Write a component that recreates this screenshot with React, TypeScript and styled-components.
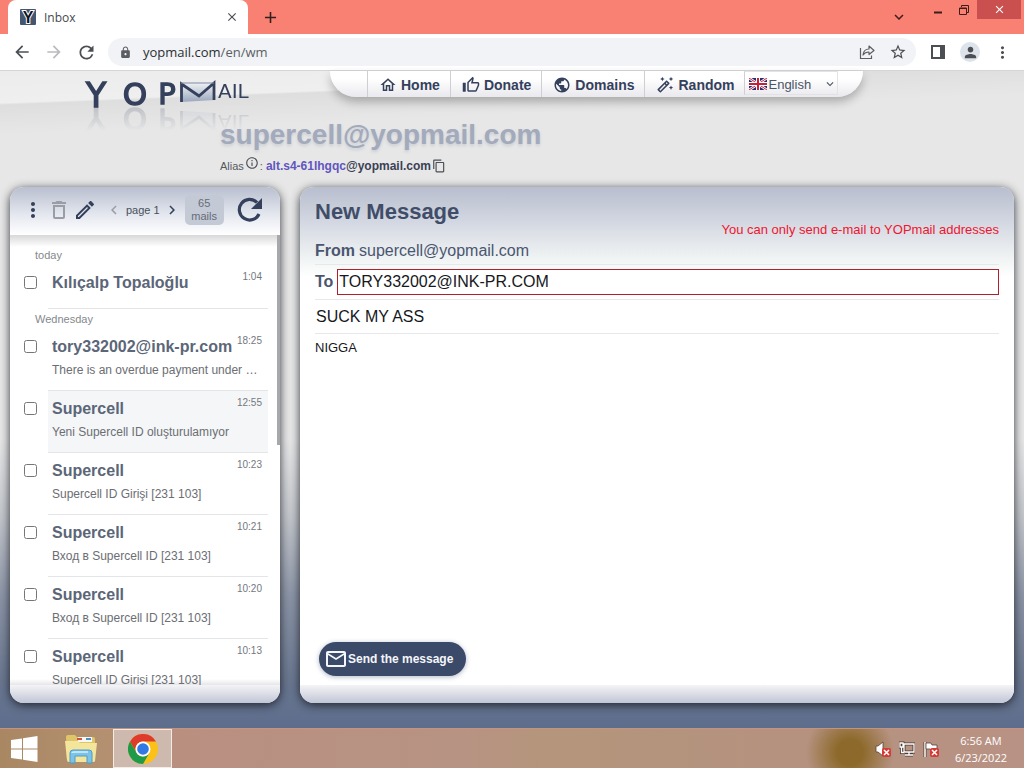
import React from "react";
import styled, { createGlobalStyle } from "styled-components";
import {
  MdAdd,
  MdArrowBack,
  MdArrowForward,
  MdChevronLeft,
  MdChevronRight,
  MdClose,
  MdContentCopy,
  MdExpandMore,
  MdLock,
  MdMoreVert,
  MdOutlineAutoFixHigh,
  MdOutlineDelete,
  MdOutlineEdit,
  MdOutlineHome,
  MdOutlineInfo,
  MdOutlineMail,
  MdOutlineThumbUp,
  MdPerson,
  MdPublic,
  MdRefresh,
  MdStarBorder,
} from "react-icons/md";

const navy = "#34405c";
const slate = "#5b6678";
const uiFont = `"Liberation Sans", Arial, sans-serif`;
const systemFont = `"Open Sans", "Noto Sans", sans-serif`;

const GlobalStyle = createGlobalStyle`
  * { box-sizing: border-box; }
  body { margin: 0; font-family: ${uiFont}; }
  button, input, textarea, select { font-family: inherit; }
  button { border: 0; padding: 0; background: none; cursor: pointer; }
  svg { display: block; flex: none; }
`;

const Screen = styled.div`
  display: flex;
  flex-direction: column;
  height: 100vh;
  min-height: 500px;
`;

/* ---------- browser chrome ---------- */

const TabStrip = styled.div`
  display: flex;
  flex: none;
  height: 34px;
  padding-left: 8px;
  background: #f88173;
`;

const Tab = styled.div`
  display: flex;
  align-items: center;
  gap: 8px;
  width: 240px;
  padding: 0 10px 0 12px;
  border-radius: 8px 8px 0 0;
  background: #fff;
  color: #45494d;
  font: 12px ${systemFont};
`;

const TabTitle = styled.span`
  flex: 1;
`;

const IconButton = styled.button<{ $color?: string; $size?: number }>`
  display: flex;
  flex: none;
  align-items: center;
  justify-content: center;
  width: ${(p) => p.$size ?? 20}px;
  height: ${(p) => p.$size ?? 20}px;
  color: ${(p) => p.$color ?? "#4b4f54"};
`;

const NewTab = styled(IconButton)`
  align-self: center;
  margin-left: 12px;
  color: #33201e;
`;

const WindowControls = styled.div`
  display: flex;
  align-items: flex-start;
  margin-left: auto;
  padding-right: 3px;
`;

const TabSearch = styled(IconButton)`
  margin: 7px 16px 0 0;
`;

const WindowButton = styled.button<{ $close?: boolean }>`
  display: flex;
  align-items: center;
  justify-content: center;
  width: ${(p) => (p.$close ? 44 : 26)}px;
  height: 19px;
  background: ${(p) => (p.$close ? "#c9504e" : "transparent")};
  color: ${(p) => (p.$close ? "#fff" : "#3c1d1a")};
`;

const Toolbar = styled.div`
  display: flex;
  flex: none;
  align-items: center;
  gap: 12px;
  height: 37px;
  padding: 0 12px;
  border-bottom: 1px solid #d5d5d7;
  background: #fff;
`;

const Omnibox = styled.div`
  display: flex;
  flex: 1;
  align-items: center;
  gap: 11px;
  height: 28px;
  padding: 0 8px 0 11px;
  border-radius: 14px;
  background: #f1f3f6;
  color: #5b5f64;
  font: 13px ${systemFont};
`;

const Address = styled.span`
  flex: 1;
  b {
    color: #2b2e31;
    font-weight: 400;
  }
`;

const Avatar = styled(IconButton)`
  border-radius: 50%;
  background: #dde3ea;
`;

/* ---------- mail site ---------- */

const Site = styled.div`
  display: flex;
  flex: 1;
  flex-direction: column;
  min-height: 0;
  background: linear-gradient(#e7e7e7 0, #e7e7e7 56%, #c2c5ca 68%, #8b94a6 80%, #6b7890 92%, #5d6d8c 100%);
`;

const Header = styled.header`
  display: flex;
  flex: none;
  height: 116px;
  background: linear-gradient(177.75deg, #ececec 0, #efefef 32px, #dedede 34px, #e7e7e7 64px);
`;

const Brand = styled.a`
  flex: none;
  width: 220px;
  padding: 8px 0 0 80px;
  svg {
    overflow: visible;
    -webkit-box-reflect: below -1px linear-gradient(transparent 10%, rgba(0, 0, 0, 0.2));
  }
`;

const HeaderBody = styled.div`
  flex: 1;
`;

const Nav = styled.nav`
  display: flex;
  width: 533px;
  height: 26px;
  margin-left: 110px;
  padding-left: 37px;
  border-radius: 0 0 30px 30px;
  background: linear-gradient(#fff 30%, #e9e9ee);
  box-shadow: 0 5px 10px rgba(0, 0, 0, 0.25);
`;

const NavLink = styled.a`
  display: flex;
  align-items: center;
  gap: 4px;
  padding: 2px 10px 0 11px;
  border-left: 1px solid #cfcfd3;
  color: ${navy};
  font-size: 14px;
  font-weight: 700;
  text-decoration: none;
`;

const Language = styled.label`
  display: flex;
  align-items: center;
  width: 94px;
  height: 24px;
  padding: 2px 0 0 4px;
  border: 1px solid #e3e3e6;
  border-left-color: #cfcfd3;
  color: #4a5468;
`;

const LanguageSelect = styled.select`
  flex: 1;
  min-width: 0;
  padding: 0 0 0 1px;
  border: 0;
  appearance: none;
  background: none;
  color: #4a5468;
  font-size: 13px;
`;

const MailboxName = styled.h1`
  margin: 20px 0 0;
  color: #a2aabb;
  font-size: 28px;
  line-height: 36px;
  text-shadow: 0 2px 3px rgba(120, 130, 155, 0.25);
`;

const Alias = styled.div`
  display: flex;
  align-items: center;
  height: 20px;
  margin-top: 3px;
  color: #54595f;
  font-size: 11px;
`;

const AliasInfo = styled(IconButton)`
  margin: 0 1px 6px 1px;
`;

const AliasAddress = styled.strong`
  margin-left: 3px;
  color: #3a4154;
  font-size: 12px;
  a {
    color: #6155c0;
    text-decoration: none;
  }
`;

const Columns = styled.div`
  display: grid;
  grid-template-columns: 270px 1fr;
  flex: 1;
  gap: 20px;
  min-height: 0;
  padding: 0 10px 25px;
`;

const Panel = styled.section`
  display: flex;
  flex-direction: column;
  min-height: 0;
  overflow: hidden;
  border-radius: 14px;
  background: #fff;
  box-shadow: 0 2px 10px rgba(20, 22, 30, 0.85);
`;

const PanelFoot = styled.div`
  flex: none;
  height: 18px;
  background: linear-gradient(#f4f4f6, #c1c6d6);
`;

const ListToolbar = styled.div`
  display: flex;
  flex: none;
  align-items: center;
  height: 48px;
  padding: 0 14px 2px 12px;
  background: linear-gradient(#b9bfcf, #e6e9f0 60%, #fff);
  color: ${navy};
`;

const Pager = styled.div`
  display: flex;
  flex: none;
  align-items: center;
  gap: 2px;
  margin: 0 3px 0 8px;
  color: #4a4f5a;
  font-size: 11px;
  white-space: nowrap;
`;

const Count = styled.div`
  flex: none;
  width: 39px;
  margin-right: 12px;
  padding: 2px 0;
  border-radius: 5px;
  background: #c4c9d6;
  color: #666c79;
  font-size: 11px;
  line-height: 13px;
  text-align: center;
`;

const ListArea = styled.div`
  display: flex;
  flex: 1;
  min-height: 0;
  background: linear-gradient(#d8d8da, #fff 12px, #fff calc(100% - 6px), #e6e6e9);
`;

const MailList = styled.div`
  flex: 1;
  min-width: 0;
  padding: 10px 9px 0 10px;
  overflow: hidden;
`;

const ScrollThumb = styled.div`
  width: 3px;
  height: 210px;
  background: #a7a8ab;
`;

const DayLabel = styled.h2`
  margin: 0;
  padding-left: 15px;
  color: #85888d;
  font-size: 11px;
  font-weight: 400;
  line-height: 20px;
`;

const Mail = styled.div`
  display: grid;
  grid-template-columns: 28px 1fr;
`;

const Check = styled.input`
  width: 13px;
  height: 13px;
  margin: 11px 0 0 4px;
`;

const MailBody = styled.div<{ $active?: boolean; $short?: boolean }>`
  min-width: 0;
  height: ${(p) => (p.$short ? 44 : 62)}px;
  padding: 6px 6px 0 4px;
  border-bottom: 1px solid #e4e5e8;
  background: ${(p) => (p.$active ? "#f4f6f8" : "transparent")};
`;

const MailTop = styled.div`
  display: flex;
  justify-content: space-between;
  line-height: 24px;
`;

const Sender = styled.strong`
  color: ${slate};
  font-size: 16px;
`;

const Time = styled.time`
  color: #74787e;
  font-size: 10px;
  line-height: 11px;
`;

const Subject = styled.div`
  color: #6b6e73;
  font-size: 12px;
  line-height: 22px;
  white-space: nowrap;
`;

const Compose = styled.form`
  display: flex;
  flex: 1;
  flex-direction: column;
  min-height: 0;
  padding: 11px 15px 9px;
  background: linear-gradient(#b8bece 0, #d4d8e2 36px, #f1f4f4 72px, #fff 90px);
`;

const Title = styled.h2`
  margin: 0;
  color: #404d68;
  font-size: 22px;
  line-height: 28px;
`;

const Warning = styled.p`
  margin: -4px 0 0;
  color: #f0142f;
  font-size: 13px;
  line-height: 15px;
  text-align: right;
`;

const Field = styled.div<{ $height: number }>`
  display: flex;
  flex: none;
  align-items: center;
  gap: 4px;
  height: ${(p) => p.$height}px;
  border-bottom: 1px solid #e6e8ec;
  color: #4a5670;
  font-size: 16px;
  label {
    font-weight: 700;
  }
`;

const TextInput = styled.input<{ $invalid?: boolean }>`
  flex: 1;
  min-width: 0;
  height: 26px;
  padding: 0 1px;
  border: ${(p) => (p.$invalid ? "1px solid #b0202c" : "0")};
  outline: 0;
  background: #fff;
  color: #16181c;
  font-size: 16px;
`;

const Message = styled.textarea`
  flex: 1;
  min-height: 0;
  padding: 6px 0;
  border: 0;
  outline: 0;
  resize: none;
  background: #fff;
  color: #16181c;
  font-size: 13px;
  line-height: 15px;
`;

const Send = styled.button`
  display: flex;
  align-items: center;
  align-self: flex-start;
  flex: none;
  height: 34px;
  margin-left: 4px;
  padding: 0 13px 0 5px;
  border-radius: 17px;
  background: #3b4a68;
  box-shadow: 0 1px 5px rgba(60, 75, 120, 0.4);
  color: #f4f6fa;
  font-size: 12px;
  font-weight: 700;
`;

/* ---------- taskbar ---------- */

const Taskbar = styled.footer`
  display: flex;
  flex: none;
  align-items: center;
  height: 40px;
  padding-right: 17px;
  border-top: 1px solid #c3937f;
  background:
    radial-gradient(ellipse 44px 44px at 83% 60%, #8d6a2b 30%, transparent),
    linear-gradient(90deg, #a98763 0, #b3906f 10%, #b98f80 17%, #b79384 44%, #b5957b 54%, #b4927f 75%, #b89284 100%);
`;

const TaskButton = styled.button<{ $active?: boolean; $width: number }>`
  display: flex;
  align-items: center;
  justify-content: center;
  width: ${(p) => p.$width}px;
  height: 39px;
  border: ${(p) => (p.$active ? "1px solid #f3ebe6" : "0")};
  background: ${(p) => (p.$active ? "#cdb9ae" : "transparent")};
`;

const Tray = styled.div`
  display: flex;
  align-items: center;
  gap: 8px;
  margin-left: auto;
`;

const Clock = styled.time`
  margin-left: 8px;
  color: #fff;
  font: 11px ${systemFont};
  line-height: 17px;
  text-align: center;
`;

/* ---------- drawings ---------- */

const Favicon = () => (
  <svg width="16" height="16" viewBox="0 0 16 16">
    <rect width="16" height="16" rx="1" fill="#46566f" />
    <text x="8" y="14" textAnchor="middle" fontFamily="Liberation Sans" fontWeight="700" fontSize="16" fill="#10141f" stroke="#fff" strokeWidth="2" paintOrder="stroke">Y</text>
  </svg>
);

const Logo = () => (
  <svg width="172" height="28" viewBox="0 0 172 28" role="img" aria-label="YOPmail">
    <g fontFamily="DejaVu Sans, sans-serif" fill={navy} stroke={navy} strokeWidth="1.400" textAnchor="middle">
      <text x="16" y="28" fontSize="33">Y</text>
      <text x="55" y="26" fontSize="31">O</text>
      <text x="87" y="25" fontSize="29">P</text>
    </g>
    <defs>
      <linearGradient id="flap" x1="0" y1="0" x2="0" y2="1">
        <stop offset="0" stopColor="#eef1f5" />
        <stop offset="1" stopColor="#9aa8bd" />
      </linearGradient>
    </defs>
    <path d="M101 4L135 4V21L101 23Z" fill="url(#flap)" />
    <path d="M101.500 23V5L119 17L134 4V21" fill="none" stroke={navy} strokeWidth="2.800" />
    <path d="M101 4H134" stroke="#7d8ba3" strokeWidth="1" />
    <text x="138" y="19" fontFamily="DejaVu Sans, sans-serif" fontSize="20" fill={navy}>AIL</text>
  </svg>
);

const Flag = () => (
  <svg width="18" height="12" viewBox="0 0 18 12">
    <rect width="18" height="12" fill="#27306e" />
    <path d="M0 0L18 12M18 0L0 12" stroke="#fff" strokeWidth="2.600" />
    <path d="M0 0L18 12M18 0L0 12" stroke="#c8203a" strokeWidth="1" />
    <path d="M9 0V12M0 6H18" stroke="#fff" strokeWidth="4" />
    <path d="M9 0V12M0 6H18" stroke="#c8203a" strokeWidth="2" />
  </svg>
);

const ReloadIcon = () => (
  <svg width="28" height="28" viewBox="0 0 28 28" fill="none">
    <path d="M23 18A10.300 10.300 0 1 1 21 6.500" stroke={navy} strokeWidth="3.200" />
    <path d="M26 2V13H15Z" fill={navy} />
  </svg>
);

const ShareIcon = () => (
  <svg width="16" height="16" viewBox="0 0 16 16" fill="none" stroke="#5b5f64" strokeWidth="1.200">
    <path d="M1.500 4V14.500H12.500V11.500" />
    <path d="M4 11C4.500 7 7 5 10 5V2L15 6.500L10 10.500V8C7.500 8 5.500 8.800 4 11Z" strokeLinejoin="round" />
  </svg>
);

const SidePanelIcon = () => (
  <svg width="14" height="14" viewBox="0 0 14 14">
    <rect x="1" y="1" width="12" height="12" fill="none" stroke="#4b4f54" strokeWidth="2" />
    <rect x="9" y="1" width="4" height="12" fill="#4b4f54" />
  </svg>
);

const WindowsLogo = () => (
  <svg width="28" height="26" viewBox="0 0 28 26" fill="#fff">
    <path d="M1 4L12 2.500V12.500H1ZM13 2.300L27.500 0V12.500H13ZM1 13.500H12V23.500L1 22ZM13 13.500H27.500V26L13 23.800Z" />
  </svg>
);

const FolderIcon = () => (
  <svg width="34" height="30" viewBox="0 0 34 30">
    <path d="M2 3Q2 1 4 1H11L13 3H29Q31 3 31 5V26H3Z" fill="#e0c46a" />
    <rect x="14" y="3" width="14" height="5" fill="#f7f7f2" />
    <path d="M13 5H18" stroke="#d0513d" strokeWidth="2" />
    <path d="M22 5H27" stroke="#4b8fc4" strokeWidth="2" />
    <path d="M1 7H14L16 9H33L31 27Q31 28 29 28H5Q3 28 3 26Z" fill="#f4e59c" />
    <path d="M6 29V19Q6 16 9 16H25Q28 16 28 19V29H23V22H11V29Z" fill="#7cc3e8" stroke="#4c9ccb" />
    <path d="M8 19Q8 18 10 18H24" stroke="#d6f0fb" strokeWidth="1.500" fill="none" />
  </svg>
);

const ChromeIcon = () => (
  <svg width="30" height="30" viewBox="0 0 30 30">
    <circle cx="15" cy="15" r="15" fill="#fbc116" />
    <path d="M2 7.500A15 15 0 0 1 28 7.500H15A7.500 7.500 0 0 0 8.500 18.800Z" fill="#de3b2c" />
    <path d="M2 7.500A15 15 0 0 0 15 30L21.500 18.800A7.500 7.500 0 0 1 8.500 18.800Z" fill="#1f9a49" />
    <circle cx="15" cy="15" r="7.500" fill="#fff" />
    <circle cx="15" cy="15" r="5.800" fill="#3279e4" />
  </svg>
);

const ErrorMark = () => (
  <g>
    <rect x="7" y="7" width="9" height="9" rx="2" fill="#d33c36" />
    <path d="M9 9L14 14M14 9L9 14" stroke="#fff" strokeWidth="1.500" />
  </g>
);

const SoundIcon = () => (
  <svg width="16" height="16" viewBox="0 0 16 16">
    <path d="M1 5H3L8 1V15L3 11H1Z" fill="#fff" stroke="#5a4037" strokeWidth="0.800" />
    <ErrorMark />
  </svg>
);

const NetworkIcon = () => (
  <svg width="16" height="16" viewBox="0 0 16 16" fill="none">
    <path d="M5 3H15V11H5ZM10 11V14M6 14H14M2.500 6V11.500H5M1 2H4V6H1Z" stroke="#4e3a33" strokeWidth="3" />
    <path d="M5 3H15V11H5ZM10 11V14M6 14H14M2.500 6V11.500H5M1 2H4V6H1Z" stroke="#fff" strokeWidth="1.300" />
  </svg>
);

const FlagStatusIcon = () => (
  <svg width="16" height="16" viewBox="0 0 16 16">
    <path d="M2 1V16" stroke="#5a4037" strokeWidth="3" />
    <path d="M2 1V16" stroke="#fff" strokeWidth="1.500" />
    <path d="M3 2H8L9 4H14V9H8L7 8H3Z" fill="#fff" stroke="#5a4037" strokeWidth="0.800" />
    <ErrorMark />
  </svg>
);

/* ---------- data ---------- */

type MailItem = { from: string; time: string; subject?: string; active?: boolean };

const days: { label: string; mails: MailItem[] }[] = [
  { label: "today", mails: [{ from: "Kılıçalp Topaloğlu", time: "1:04" }] },
  {
    label: "Wednesday",
    mails: [
      { from: "tory332002@ink-pr.com", time: "18:25", subject: "There is an overdue payment under …" },
      { from: "Supercell", time: "12:55", subject: "Yeni Supercell ID oluşturulamıyor", active: true },
      { from: "Supercell", time: "10:23", subject: "Supercell ID Girişi [231 103]" },
      { from: "Supercell", time: "10:21", subject: "Вход в Supercell ID [231 103]" },
      { from: "Supercell", time: "10:20", subject: "Вход в Supercell ID [231 103]" },
      { from: "Supercell", time: "10:13", subject: "Supercell ID Girişi [231 103]" },
    ],
  },
];

const links = [
  { label: "Home", Icon: MdOutlineHome },
  { label: "Donate", Icon: MdOutlineThumbUp },
  { label: "Domains", Icon: MdPublic },
  { label: "Random", Icon: MdOutlineAutoFixHigh },
];

const BrowserChrome = () => (
  <>
    <TabStrip>
      <Tab>
        <Favicon />
        <TabTitle>Inbox</TabTitle>
        <IconButton $size={12} aria-label="Close tab"><MdClose size={14} /></IconButton>
      </Tab>
      <NewTab aria-label="New tab"><MdAdd size={19} /></NewTab>
      <WindowControls>
        <TabSearch $color="#3c1d1a" aria-label="Search tabs"><MdExpandMore size={18} /></TabSearch>
        <WindowButton aria-label="Minimize">
          <svg width="10" height="12" viewBox="0 0 10 12"><path d="M1 8.500H9" stroke="currentColor" strokeWidth="2" /></svg>
        </WindowButton>
        <WindowButton aria-label="Restore">
          <svg width="10" height="10" viewBox="0 0 10 10" fill="none" stroke="currentColor"><path d="M.5 3V9.500H7.500V3ZM.5 3.500H7.500M2.500 2V.5H9.500V7.500H8" /></svg>
        </WindowButton>
        <WindowButton $close aria-label="Close"><MdClose size={13} /></WindowButton>
      </WindowControls>
    </TabStrip>
    <Toolbar>
      <IconButton aria-label="Back"><MdArrowBack size={20} /></IconButton>
      <IconButton $color="#b9bbbe" aria-label="Forward"><MdArrowForward size={20} /></IconButton>
      <IconButton aria-label="Reload"><MdRefresh size={21} /></IconButton>
      <Omnibox>
        <MdLock size={13} />
        <Address><b>yopmail.com</b>/en/wm</Address>
        <IconButton aria-label="Share"><ShareIcon /></IconButton>
        <IconButton aria-label="Bookmark"><MdStarBorder size={18} /></IconButton>
      </Omnibox>
      <IconButton aria-label="Side panel"><SidePanelIcon /></IconButton>
      <Avatar aria-label="Profile"><MdPerson size={17} /></Avatar>
      <IconButton aria-label="Menu"><MdMoreVert size={19} /></IconButton>
    </Toolbar>
  </>
);

const SiteHeader = () => (
  <Header>
    <Brand href="#home"><Logo /></Brand>
    <HeaderBody>
      <Nav>
        {links.map(({ label, Icon }) => (
          <NavLink key={label} href={`#${label.toLowerCase()}`}><Icon size={18} />{label}</NavLink>
        ))}
        <Language>
          <Flag />
          <LanguageSelect aria-label="Language"><option>English</option></LanguageSelect>
          <MdExpandMore size={14} />
        </Language>
      </Nav>
      <MailboxName>supercell@yopmail.com</MailboxName>
      <Alias>
        Alias
        <AliasInfo $size={14} aria-label="About aliases"><MdOutlineInfo size={14} /></AliasInfo>
        :
        <AliasAddress><a href="#alias">alt.s4-61lhgqc</a>@yopmail.com</AliasAddress>
        <IconButton $size={15} aria-label="Copy alias"><MdContentCopy size={14} /></IconButton>
      </Alias>
    </HeaderBody>
  </Header>
);

const Inbox = () => (
  <Panel>
    <ListToolbar>
      <IconButton $size={22} $color={navy} aria-label="More"><MdMoreVert size={24} /></IconButton>
      <IconButton $size={30} $color="#9a9da6" aria-label="Delete"><MdOutlineDelete size={24} /></IconButton>
      <IconButton $size={22} $color={navy} aria-label="Write"><MdOutlineEdit size={24} /></IconButton>
      <Pager>
        <IconButton $color="#9a9da6" aria-label="Previous page"><MdChevronLeft size={18} /></IconButton>
        page 1
        <IconButton $color={navy} aria-label="Next page"><MdChevronRight size={18} /></IconButton>
      </Pager>
      <Count>65<br />mails</Count>
      <IconButton $size={28} aria-label="Refresh inbox"><ReloadIcon /></IconButton>
    </ListToolbar>
    <ListArea>
      <MailList>
        {days.map((day) => (
          <React.Fragment key={day.label}>
            <DayLabel>{day.label}</DayLabel>
            {day.mails.map((mail) => (
              <Mail key={mail.time}>
                <Check type="checkbox" aria-label={`Select ${mail.from} ${mail.time}`} />
                <MailBody $active={mail.active} $short={!mail.subject}>
                  <MailTop><Sender>{mail.from}</Sender><Time>{mail.time}</Time></MailTop>
                  {mail.subject && <Subject>{mail.subject}</Subject>}
                </MailBody>
              </Mail>
            ))}
          </React.Fragment>
        ))}
      </MailList>
      <ScrollThumb />
    </ListArea>
    <PanelFoot />
  </Panel>
);

const Composer = () => (
  <Panel>
    <Compose>
      <Title>New Message</Title>
      <Warning>You can only send e-mail to YOPmail addresses</Warning>
      <Field $height={28}><strong>From</strong><span>supercell@yopmail.com</span></Field>
      <Field $height={35}>
        <label htmlFor="to">To</label>
        <TextInput id="to" $invalid defaultValue="TORY332002@INK-PR.COM" />
      </Field>
      <Field $height={34}><TextInput aria-label="Subject" defaultValue="SUCK MY ASS" /></Field>
      <Message aria-label="Message" defaultValue="NIGGA" />
      <Send type="button"><MdOutlineMail size={24} />Send the message</Send>
    </Compose>
    <PanelFoot />
  </Panel>
);

const DesktopBar = () => (
  <Taskbar>
    <TaskButton $width={48} aria-label="Start"><WindowsLogo /></TaskButton>
    <TaskButton $width={65} aria-label="File Explorer"><FolderIcon /></TaskButton>
    <TaskButton $width={59} $active aria-label="Chrome"><ChromeIcon /></TaskButton>
    <Tray>
      <SoundIcon />
      <NetworkIcon />
      <FlagStatusIcon />
      <Clock>6:56 AM<br />6/23/2022</Clock>
    </Tray>
  </Taskbar>
);

export default function App() {
  return (
    <Screen>
      <GlobalStyle />
      <BrowserChrome />
      <Site>
        <SiteHeader />
        <Columns>
          <Inbox />
          <Composer />
        </Columns>
      </Site>
      <DesktopBar />
    </Screen>
  );
}
